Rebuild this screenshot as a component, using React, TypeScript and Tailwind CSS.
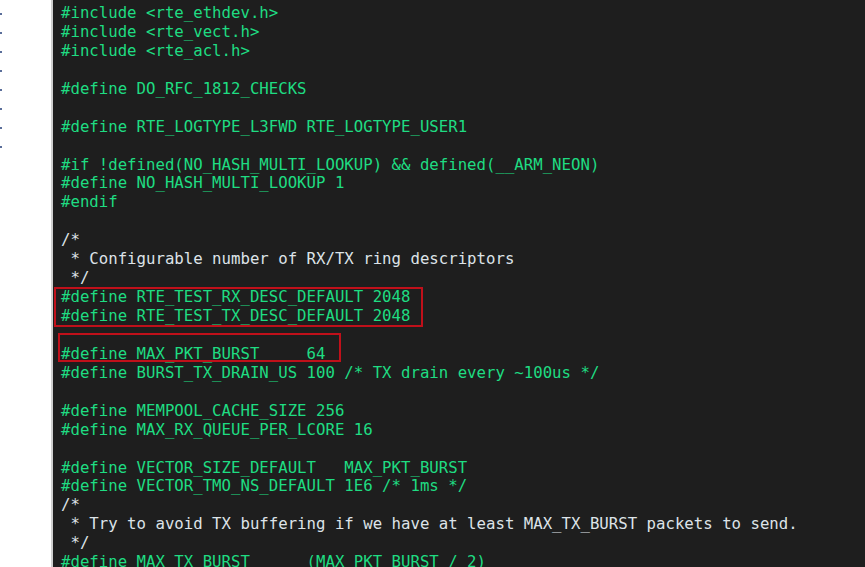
import React from 'react';

type Line = { text: string; comment?: boolean };

const lines: Line[] = [
    { text: '#include <rte_ethdev.h>' },
    { text: '#include <rte_vect.h>' },
    { text: '#include <rte_acl.h>' },
    { text: '' },
    { text: '#define DO_RFC_1812_CHECKS' },
    { text: '' },
    { text: '#define RTE_LOGTYPE_L3FWD RTE_LOGTYPE_USER1' },
    { text: '' },
    { text: '#if !defined(NO_HASH_MULTI_LOOKUP) && defined(__ARM_NEON)' },
    { text: '#define NO_HASH_MULTI_LOOKUP 1' },
    { text: '#endif' },
    { text: '' },
    { text: '/*', comment: true },
    { text: ' * Configurable number of RX/TX ring descriptors', comment: true },
    { text: ' */', comment: true },
    { text: '#define RTE_TEST_RX_DESC_DEFAULT 2048' },
    { text: '#define RTE_TEST_TX_DESC_DEFAULT 2048' },
    { text: '' },
    { text: '#define MAX_PKT_BURST     64' },
    { text: '#define BURST_TX_DRAIN_US 100 /* TX drain every ~100us */' },
    { text: '' },
    { text: '#define MEMPOOL_CACHE_SIZE 256' },
    { text: '#define MAX_RX_QUEUE_PER_LCORE 16' },
    { text: '' },
    { text: '#define VECTOR_SIZE_DEFAULT   MAX_PKT_BURST' },
    { text: '#define VECTOR_TMO_NS_DEFAULT 1E6 /* 1ms */' },
    { text: '/*', comment: true },
    { text: ' * Try to avoid TX buffering if we have at least MAX_TX_BURST packets to send.', comment: true },
    { text: ' */', comment: true },
    { text: '#define MAX_TX_BURST      (MAX_PKT_BURST / 2)' },
];

export default function App() {
    return (
        <div className="flex w-[865px] h-[567px] overflow-hidden bg-white">
            {/* left gutter with tick marks */}
            <div className="w-[51px] shrink-0 bg-white flex flex-col pt-[13px] gap-[17px]">
                {Array.from({ length: 8 }).map((_, i) => (
                    <div key={i} className="w-[2px] h-[2px] bg-[#5a6e9a]" />
                ))}
            </div>

            {/* editor */}
            <div className="relative flex-1 border-l-2 border-[#cfcfcf] bg-[#1e1e1e] pl-[8px] pt-[4px]">
                <pre
                    className="m-0 text-[15.7px] leading-[18.95px] text-[#1fdc82]"
                    style={{ fontFamily: '"DejaVu Sans Mono", "Liberation Mono", monospace' }}
                >
                    {lines.map((l, i) => (
                        <div key={i} className={`h-[18.95px] ${l.comment ? 'text-[#dde3e8]' : ''}`}>
                            {l.text || ' '}
                        </div>
                    ))}
                </pre>

                {/* red highlight boxes */}
                <div className="absolute left-[1px] top-[287px] w-[369px] h-[40px] border-2 border-[#c0101a]" />
                <div className="absolute left-[5px] top-[333px] w-[283px] h-[29px] border-2 border-[#c0101a]" />
            </div>
        </div>
    );
}
